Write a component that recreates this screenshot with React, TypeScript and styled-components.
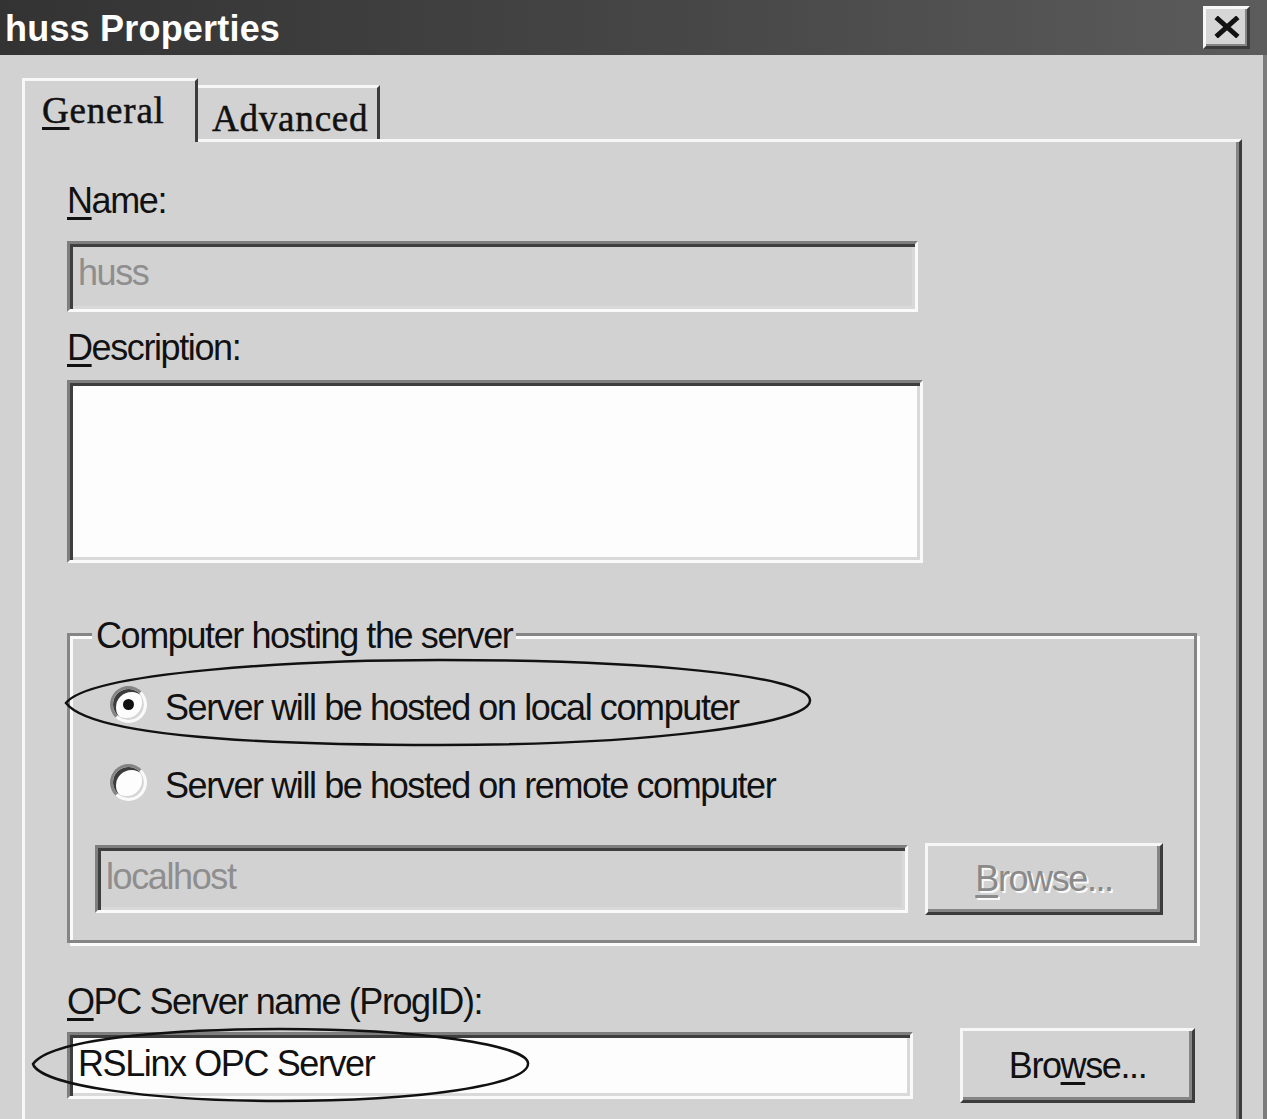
import React from "react";
import styled, { createGlobalStyle } from "styled-components";

const FACE = "#d2d2d2";
const LIGHT = "#f7f7f7";
const DARK = "#3c3c3c";
const SHADOW = "#858585";

const GlobalStyle = createGlobalStyle`
  html, body { margin: 0; padding: 0; background: ${FACE}; }
  body { font-family: "Liberation Sans", Arial, sans-serif; }
  * { box-sizing: border-box; }
`;

const Window = styled.div`
  position: relative;
  width: 1267px;
  height: 1119px;
  overflow: hidden;
  background: ${FACE};
  display: flex;
  flex-direction: column;
`;

const TitleBar = styled.div`
  height: 55px;
  flex: none;
  display: flex;
  align-items: center;
  justify-content: space-between;
  padding: 0 17px 1px 5px;
  background: linear-gradient(to right, #333333, #474747 55%, #5c5c5c);
`;

const Title = styled.div`
  color: #fff;
  font: bold 36px/40px "Liberation Sans", Arial, sans-serif;
  letter-spacing: 0.2px;
  margin-top: 3px;
`;

const CloseButton = styled.button`
  width: 47px;
  height: 43px;
  padding: 0;
  background: #d6d6d6;
  border: 3px solid;
  border-color: ${LIGHT} ${DARK} ${DARK} ${LIGHT};
  box-shadow: inset -2px -2px 0 ${SHADOW};
  display: flex;
  align-items: center;
  justify-content: center;
`;

const Body = styled.div`
  flex: 1;
  display: flex;
  flex-direction: column;
  padding: 23px 21px 0 22px;
  border-right: 4px solid #7c7c7c;
`;

const TabStrip = styled.div`
  display: flex;
  align-items: flex-end;
  height: 61px;
  flex: none;
`;

const Tab = styled.div<{ $active?: boolean }>`
  position: relative;
  z-index: ${(p) => (p.$active ? 1 : 0)};
  width: ${(p) => (p.$active ? 176 : 182)}px;
  height: ${(p) => (p.$active ? 64 : 54)}px;
  margin-bottom: ${(p) => (p.$active ? -3 : 0)}px;
  padding: ${(p) => (p.$active ? "10px 0 0 17px" : "11px 0 0 14px")};
  background: ${FACE};
  border-top: 3px solid ${LIGHT};
  border-left: ${(p) => (p.$active ? `3px solid ${LIGHT}` : "none")};
  border-right: 3px solid ${DARK};
  font: 37px/40px "Liberation Serif", "Times New Roman", serif;
  -webkit-text-stroke: 0.5px #111;
  letter-spacing: 0.8px;
  color: #111;
  white-space: nowrap;
`;

const Panel = styled.div`
  flex: 1;
  display: flex;
  flex-direction: column;
  align-items: flex-start;
  padding: 39px 0 0 42px;
  border-top: 3px solid ${LIGHT};
  border-left: 3px solid ${LIGHT};
  border-right: 3px solid ${DARK};
  box-shadow: inset -3px 0 0 ${SHADOW};
`;

const Label = styled.div<{ $mt?: number }>`
  margin-top: ${(p) => p.$mt ?? 0}px;
  font-size: 36px;
  line-height: 40px;
  letter-spacing: -1.4px;
  color: #111;
  white-space: nowrap;
`;

const Key = styled.span`
  text-decoration: underline;
  text-decoration-thickness: 3px;
  text-underline-offset: 4px;
`;

const Field = styled.div<{ $w: number; $h: number; $mt?: number; $disabled?: boolean }>`
  flex: none;
  width: ${(p) => p.$w}px;
  height: ${(p) => p.$h}px;
  margin-top: ${(p) => p.$mt ?? 0}px;
  padding: 9px 0 0 8px;
  background: ${(p) => (p.$disabled ? FACE : "#fdfdfd")};
  border: 3px solid;
  border-color: #7e7e7e #fafafa #fafafa #7e7e7e;
  box-shadow: inset 3px 3px 0 #3e3e3e, inset -3px -3px 0 #d9d9d9;
  font-size: 36px;
  line-height: 40px;
  letter-spacing: -1.4px;
  color: ${(p) => (p.$disabled ? "#8e8e8e" : "#111")};
  white-space: nowrap;
`;

const GroupBox = styled.fieldset`
  margin: 49px 0 0 0;
  padding: 0;
  width: 1130px;
  min-inline-size: 0;
  border: 3px solid ${SHADOW};
  box-shadow: inset 3px 3px 0 #fafafa, 3px 3px 0 #fafafa;
`;

const Legend = styled.legend`
  margin-left: 22px;
  padding: 4px 4px 0;
  background: ${FACE};
  font-size: 36px;
  line-height: 40px;
  letter-spacing: -1.4px;
  color: #111;
  white-space: nowrap;
`;

const GroupBody = styled.div`
  display: flex;
  flex-direction: column;
  align-items: flex-start;
  padding: 23px 0 25px 25px;
`;

const RadioRow = styled.div<{ $mt?: number }>`
  display: flex;
  align-items: center;
  gap: 18px;
  height: 50px;
  margin: ${(p) => p.$mt ?? 0}px 0 0 15px;
`;

const RadioCircle = styled.span<{ $checked?: boolean }>`
  position: relative;
  flex: none;
  width: 37px;
  height: 37px;
  border-radius: 50%;
  background: #fdfdfd;
  border: 3px solid;
  border-color: #848484 #fafafa #fafafa #848484;
  box-shadow: inset 3px 3px 0 #3c3c3c, inset -2px -2px 0 #d6d6d6;
  &::after {
    content: "";
    display: ${(p) => (p.$checked ? "block" : "none")};
    position: absolute;
    left: 50%;
    top: 50%;
    width: 11px;
    height: 11px;
    margin: -5.5px 0 0 -5.5px;
    border-radius: 50%;
    background: #111;
  }
`;

const RadioLabel = styled.span`
  margin-top: 7px;
  font-size: 36px;
  line-height: 40px;
  letter-spacing: -1.4px;
  color: #111;
  white-space: nowrap;
`;

const FieldRow = styled.div<{ $gap: number; $mt?: number }>`
  display: flex;
  align-items: center;
  gap: ${(p) => p.$gap}px;
  margin-top: ${(p) => p.$mt ?? 0}px;
`;

const Button = styled.button<{ $w: number; $h: number; $disabled?: boolean }>`
  flex: none;
  width: ${(p) => p.$w}px;
  height: ${(p) => p.$h}px;
  padding: 0;
  background: ${FACE};
  border: 3px solid;
  border-color: ${LIGHT} ${DARK} ${DARK} ${LIGHT};
  box-shadow: inset -3px -3px 0 ${SHADOW};
  font-family: "Liberation Sans", Arial, sans-serif;
  font-size: 36px;
  line-height: 40px;
  letter-spacing: -1.4px;
  color: ${(p) => (p.$disabled ? "#8a8a8a" : "#111")};
  text-shadow: ${(p) => (p.$disabled ? "2px 2px 0 #fafafa" : "none")};
  white-space: nowrap;
`;

const Annotations = styled.svg`
  position: absolute;
  left: 0;
  top: 0;
  width: 1267px;
  height: 1119px;
  pointer-events: none;
`;

export default function App() {
  return (
    <>
      <GlobalStyle />
      <Window>
        <TitleBar>
          <Title>huss Properties</Title>
          <CloseButton aria-label="Close">
            <svg width="28" height="22" viewBox="0 0 28 22">
              <path d="M5 3 L23 19 M23 3 L5 19" stroke="#111" strokeWidth="5" strokeLinecap="square" />
            </svg>
          </CloseButton>
        </TitleBar>
        <Body>
          <TabStrip>
            <Tab $active>
              <Key>G</Key>eneral
            </Tab>
            <Tab>Advanced</Tab>
          </TabStrip>
          <Panel>
            <Label>
              <Key>N</Key>ame:
            </Label>
            <Field $w={851} $h={71} $mt={20} $disabled>
              huss
            </Field>
            <Label $mt={16}>
              <Key>D</Key>escription:
            </Label>
            <Field $w={856} $h={183} $mt={12} />
            <GroupBox>
              <Legend>Computer hosting the server</Legend>
              <GroupBody>
                <RadioRow>
                  <RadioCircle $checked />
                  <RadioLabel>Server will be hosted on local computer</RadioLabel>
                </RadioRow>
                <RadioRow $mt={28}>
                  <RadioCircle />
                  <RadioLabel>Server will be hosted on remote computer</RadioLabel>
                </RadioRow>
                <FieldRow $gap={17} $mt={36}>
                  <Field $w={813} $h={68} $disabled>
                    localhost
                  </Field>
                  <Button $w={238} $h={72} $disabled>
                    <Key>B</Key>rowse...
                  </Button>
                </FieldRow>
              </GroupBody>
            </GroupBox>
            <Label $mt={39}>
              <Key>O</Key>PC Server name (ProgID):
            </Label>
            <FieldRow $gap={47} $mt={6}>
              <Field $w={846} $h={67}>RSLinx OPC Server</Field>
              <Button $w={235} $h={75}>
                Bro<Key>w</Key>se...
              </Button>
            </FieldRow>
          </Panel>
        </Body>
        <Annotations viewBox="0 0 1267 1119">
          <path
            d="M66 703 C90 672 300 660 440 660 C640 660 808 675 810 700 C812 725 640 745 440 745 C250 745 90 735 66 703 Z"
            fill="none"
            stroke="#111"
            strokeWidth="2.5"
          />
          <path
            d="M33 1064 C50 1040 160 1029 280 1029 C420 1029 526 1045 528 1063 C530 1085 420 1101 280 1101 C150 1101 40 1085 33 1064 Z"
            fill="none"
            stroke="#111"
            strokeWidth="2.5"
          />
        </Annotations>
      </Window>
    </>
  );
}
